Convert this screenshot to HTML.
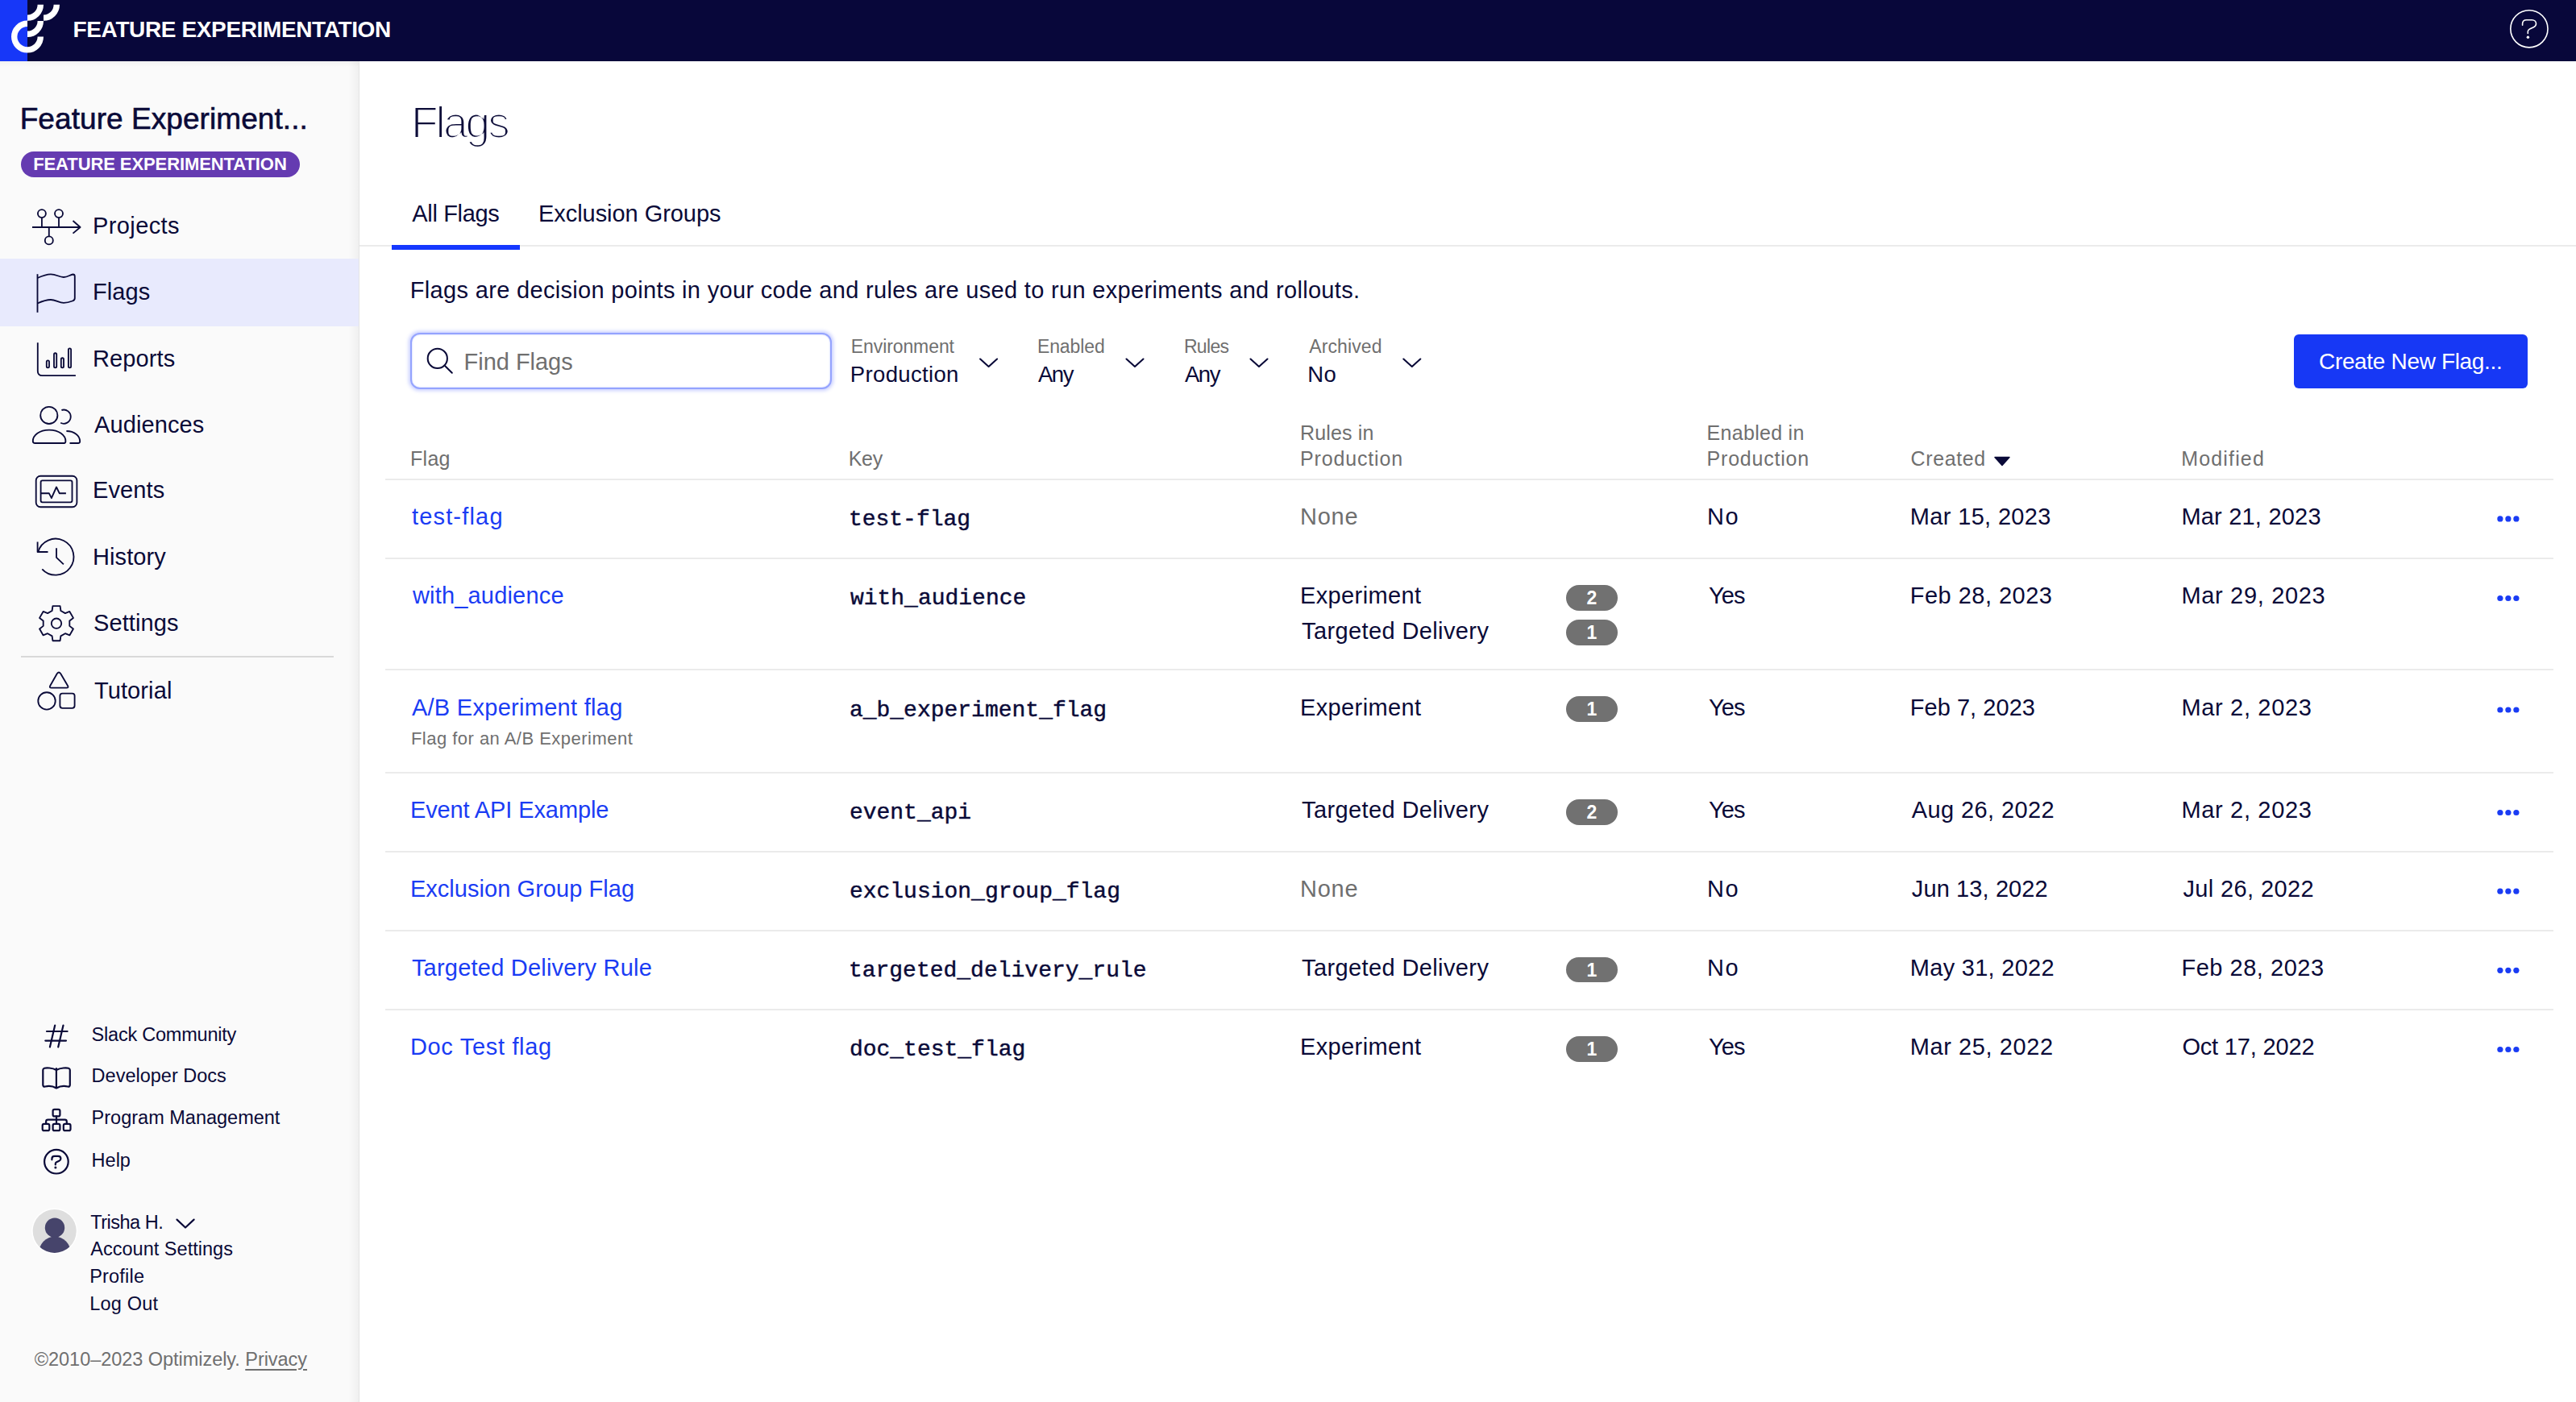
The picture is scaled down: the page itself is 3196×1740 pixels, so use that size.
<!DOCTYPE html>
<html><head><meta charset="utf-8"><title>Flags</title>
<style>
html,body{margin:0;padding:0;}
body{width:3196px;height:1740px;position:relative;overflow:hidden;background:#fff;font-family:"Liberation Sans",sans-serif;}
.t{position:absolute;white-space:nowrap;}
</style></head><body>
<svg width="0" height="0" style="position:absolute;left:0;top:0"><defs><filter id="erode1" x="-10%" y="-10%" width="120%" height="120%"><feMorphology operator="erode" radius="1"/></filter></defs></svg>
<div style="position:absolute;left:0.0px;top:76.0px;width:446.0px;height:1664.0px;background:#fafafa;"></div><div style="position:absolute;left:432.0px;top:76.0px;width:14.0px;height:1664.0px;background:linear-gradient(to right, rgba(0,0,0,0), rgba(0,0,0,0.045));"></div><div style="position:absolute;left:445.0px;top:76.0px;width:1.0px;height:1664.0px;background:#e4e4e4;"></div><div style="position:absolute;left:0.0px;top:76.0px;width:445.0px;height:7.0px;background:linear-gradient(to bottom, rgba(0,0,0,0.035), rgba(0,0,0,0));"></div><div style="position:absolute;left:0.0px;top:0.0px;width:3196.0px;height:76.0px;background:#08073a;"></div><div style="position:absolute;left:0.0px;top:0.0px;width:34.0px;height:76.0px;background:#1737f8;"></div><svg style="position:absolute;left:0px;top:0px;" width="100" height="76" viewBox="0 0 100 76" fill="none"><g stroke="#fff" stroke-width="7.4" fill="none"><path d="M34,29.3 A16.3,16.3 0 0 0 17.7,45.6 A16.3,16.3 0 0 0 34,61.9 A16.3,16.3 0 0 0 50.3,45.6"/><path d="M34,42.3 A16.3,16.3 0 0 0 50.3,26"/><path d="M34,22.1 A16.3,16.3 0 0 0 50.3,5.8"/><path d="M54,22.1 A16.3,16.3 0 0 0 70.3,5.8"/></g></svg><div class="t" style="left:90.6px;top:22.5px;font-size:28px;line-height:28px;color:#fff;font-weight:700;letter-spacing:-0.376px;font-family:'Liberation Sans',sans-serif;">FEATURE EXPERIMENTATION</div><svg style="position:absolute;left:3090px;top:0px;" width="100" height="76" viewBox="3090 0 100 76" fill="none"><g stroke="#fff" stroke-width="1.6" fill="none" stroke-linecap="round" stroke-linejoin="round"><circle cx="3137.9" cy="35.8" r="23.1"/><path d="M3129.6,31.2 V29.6 C3129.6,26.6 3131.6,24.8 3134.6,24.8 H3141.4 C3144.4,24.8 3146.5,26.8 3146.5,29.6 C3146.5,31.6 3145.3,32.9 3143.5,33.7 L3138.6,35.9 C3137.1,36.6 3136.3,37.6 3136.3,39.1 V41.5"/></g><circle cx="3136.4" cy="46.3" r="1.7" fill="#fff"/></svg><div class="t" style="left:24.7px;top:129.2px;font-size:37px;line-height:37px;color:#0a0a38;font-weight:400;letter-spacing:0.066px;font-family:'Liberation Sans',sans-serif;-webkit-text-stroke:0.6px #0a0a38;">Feature Experiment...</div><div style="position:absolute;left:26.0px;top:188.0px;width:346.0px;height:32.0px;background:#653bb1;border-radius:16px;"></div><div class="t" style="left:41.2px;top:193.2px;font-size:22px;line-height:22px;color:#fff;font-weight:700;letter-spacing:-0.09px;font-family:'Liberation Sans',sans-serif;">FEATURE EXPERIMENTATION</div><div style="position:absolute;left:0.0px;top:321.4px;width:445.0px;height:83.2px;background:#e8eafd;"></div><div class="t" style="left:115.0px;top:265.9px;font-size:29px;line-height:29px;color:#0a0a38;font-weight:400;letter-spacing:0.392px;font-family:'Liberation Sans',sans-serif;">Projects</div><div class="t" style="left:115.0px;top:348.1px;font-size:29px;line-height:29px;color:#0a0a38;font-weight:400;letter-spacing:0.1px;font-family:'Liberation Sans',sans-serif;">Flags</div><div class="t" style="left:115.0px;top:430.7px;font-size:29px;line-height:29px;color:#0a0a38;font-weight:400;letter-spacing:0.1px;font-family:'Liberation Sans',sans-serif;">Reports</div><div class="t" style="left:117.0px;top:512.7px;font-size:29px;line-height:29px;color:#0a0a38;font-weight:400;letter-spacing:0.1px;font-family:'Liberation Sans',sans-serif;">Audiences</div><div class="t" style="left:115.0px;top:594.2px;font-size:29px;line-height:29px;color:#0a0a38;font-weight:400;letter-spacing:0.1px;font-family:'Liberation Sans',sans-serif;">Events</div><div class="t" style="left:115.0px;top:676.8px;font-size:29px;line-height:29px;color:#0a0a38;font-weight:400;letter-spacing:0.1px;font-family:'Liberation Sans',sans-serif;">History</div><div class="t" style="left:116.0px;top:758.8px;font-size:29px;line-height:29px;color:#0a0a38;font-weight:400;letter-spacing:0.1px;font-family:'Liberation Sans',sans-serif;">Settings</div><div class="t" style="left:117.0px;top:842.6px;font-size:29px;line-height:29px;color:#0a0a38;font-weight:400;letter-spacing:0.1px;font-family:'Liberation Sans',sans-serif;">Tutorial</div><div style="position:absolute;left:26.0px;top:813.8px;width:388.0px;height:2.0px;background:#d9d9d9;"></div><svg style="position:absolute;left:0px;top:76px;" width="446" height="1664" viewBox="0 76 446 1664" fill="none"><g stroke="#0a0a38" stroke-width="1.85" fill="none" stroke-linecap="butt" stroke-linejoin="round"><path d="M40,282 H99.6 M90.5,274 L99.6,282 L90.5,289.6"/><circle cx="51.9" cy="265.1" r="5"/><path d="M51.9,270.1 V282"/><circle cx="73" cy="265.1" r="5"/><path d="M73,270.1 V282"/><circle cx="60.8" cy="298.4" r="5"/><path d="M60.8,282 V293.4"/><path d="M46.5,340.2 V387.8"/><path d="M46.5,345 C53,342 58,340.3 63,340.3 C70,340.3 73,344 79,344 C84,344 87,341 90.5,340.5 Q92.8,340.5 92.8,343 V370 Q92.8,372.5 90,373.5 C86,375 82,375.8 79,375.8 C73,375.8 69,372 63,372 C57,372 52,374 46.5,376.5"/><path d="M46.8,425.3 V460.4 Q46.8,466.1 52.5,466.1 H93.9"/><rect x="57.8" y="447.3" width="3.2" height="9" rx="1.6"/><rect x="67" y="438.2" width="3.2" height="18.1" rx="1.6"/><rect x="75.8" y="444.2" width="3.2" height="12.1" rx="1.6"/><rect x="84.9" y="432.4" width="3.2" height="23.9" rx="1.6"/><circle cx="60.8" cy="515.4" r="10.6"/><path d="M76.4,509 A8.6,8.6 0 1 1 75.2,524.8"/><path d="M43.5,550 H79.5 Q81.4,550 81.4,547.5 C81.4,540 73,533.6 61,533.6 C49,533.6 40.8,540 40.8,547.5 Q40.8,550 43.5,550 Z"/><path d="M82.4,535 C92,535 99.2,540.5 99.2,547.8 Q99.2,550 97,550 H86.5"/><rect x="44.7" y="590.7" width="50.7" height="38.5" rx="5.5"/><rect x="50.6" y="596.4" width="38.9" height="26.9" rx="2"/><path d="M50.6,612.2 H60.8 L63.9,618.2 L70,604.5 L73.7,612.2 H81.9"/><path d="M47.3,685 A22.5,22.5 0 1 1 52.3,706.3"/><path d="M46.6,672.5 V685 H59.5"/><path d="M70,680.2 V691.9 L78.9,700.4"/><path d="M64.60,758.00 L65.43,752.18 L74.57,752.18 L75.40,758.00 L80.89,761.17 L86.35,758.98 L90.92,766.90 L86.30,770.53 L86.30,776.87 L90.92,780.50 L86.35,788.42 L80.89,786.23 L75.40,789.40 L74.57,795.22 L65.43,795.22 L64.60,789.40 L59.11,786.23 L53.65,788.42 L49.08,780.50 L53.70,776.87 L53.70,770.53 L49.08,766.90 L53.65,758.98 L59.11,761.17 Z"/><circle cx="70" cy="773.7" r="6.2"/><path d="M70.8,836 Q73,833 75.2,836 L84,851 Q85.5,853.6 82.5,853.6 H63.8 Q60.8,853.6 62.3,851 Z"/><circle cx="58" cy="869.9" r="10.7"/><rect x="74.4" y="860.6" width="18.2" height="18.2" rx="3"/></g></svg><div class="t" style="left:113.6px;top:1272.7px;font-size:23.5px;line-height:23.5px;color:#0a0a38;font-weight:400;letter-spacing:-0.22px;font-family:'Liberation Sans',sans-serif;">Slack Community</div><div class="t" style="left:113.6px;top:1324.4px;font-size:23.5px;line-height:23.5px;color:#0a0a38;font-weight:400;letter-spacing:0.0px;font-family:'Liberation Sans',sans-serif;">Developer Docs</div><div class="t" style="left:113.6px;top:1376.1px;font-size:23.5px;line-height:23.5px;color:#0a0a38;font-weight:400;letter-spacing:0.0px;font-family:'Liberation Sans',sans-serif;">Program Management</div><div class="t" style="left:113.6px;top:1428.6px;font-size:23.5px;line-height:23.5px;color:#0a0a38;font-weight:400;letter-spacing:0.0px;font-family:'Liberation Sans',sans-serif;">Help</div><svg style="position:absolute;left:0px;top:1250px;" width="446" height="220" viewBox="0 1250 446 220" fill="none"><g stroke="#0a0a38" stroke-width="2.2" fill="none" stroke-linecap="round" stroke-linejoin="round"><path d="M68.2,1272.5 L61.9,1299.5 M78.5,1272.5 L72.2,1299.5 M58,1280 H83.6 M56.3,1291.6 H82"/><path d="M69.9,1326 V1350.5 M69.9,1328 C65,1325 57,1325 55,1325.8 Q53.3,1326.3 53.3,1328 V1346.5 Q53.3,1349 56,1348.5 C60,1347.5 65,1347.5 69.9,1350.5 C75,1347.5 80,1347.5 84,1348.5 Q86.8,1349 86.8,1346.5 V1328 Q86.8,1326.3 85,1325.8 C83,1325 75,1325 69.9,1328"/><rect x="65.6" y="1376.8" width="8.8" height="8.6" rx="2"/><path d="M70,1385.4 V1394.7 M57.1,1394.7 V1392 Q57.1,1389.7 59.5,1389.7 H80.5 Q82.8,1389.7 82.8,1392 V1394.7"/><rect x="52.7" y="1394.9" width="8.6" height="8.3" rx="2"/><rect x="65.6" y="1394.9" width="8.8" height="8.3" rx="2"/><rect x="78.8" y="1394.9" width="8.7" height="8.3" rx="2"/><circle cx="69.9" cy="1441.7" r="14.8"/><path d="M64.4,1439.3 V1438.2 C64.4,1436.2 65.7,1434.9 67.7,1434.9 H72.1 C74.1,1434.9 75.4,1436.2 75.4,1438.1 C75.4,1439.4 74.6,1440.3 73.4,1440.8 L70.2,1442.2 C69.2,1442.7 68.8,1443.3 68.8,1444.3 V1445.4"/></g><circle cx="68.9" cy="1448.9" r="1.5" fill="#0a0a38"/></svg><svg style="position:absolute;left:0px;top:1490px;" width="446" height="80" viewBox="0 1490 446 80" fill="none"><defs><clipPath id="av"><circle cx="67.7" cy="1527.9" r="27"/></clipPath></defs><circle cx="67.7" cy="1527.9" r="28.5" fill="#ffffff"/><circle cx="67.7" cy="1527.9" r="27" fill="#dedede"/><g clip-path="url(#av)" fill="#46446b"><circle cx="68" cy="1523.7" r="12.2"/><ellipse cx="68" cy="1556" rx="20" ry="21.5"/></g><path d="M219.5,1513.6 L230,1523.5 L240.6,1513.6" stroke="#0a0a38" stroke-width="2.2" fill="none" stroke-linecap="round" stroke-linejoin="round"/></svg><div class="t" style="left:112.2px;top:1505.5px;font-size:23.5px;line-height:23.5px;color:#0a0a38;font-weight:400;letter-spacing:-0.49px;font-family:'Liberation Sans',sans-serif;">Trisha H.</div><div class="t" style="left:112.2px;top:1539.2px;font-size:23.5px;line-height:23.5px;color:#0a0a38;font-weight:400;letter-spacing:0.026px;font-family:'Liberation Sans',sans-serif;">Account Settings</div><div class="t" style="left:111.2px;top:1572.8px;font-size:23.5px;line-height:23.5px;color:#0a0a38;font-weight:400;letter-spacing:0.2px;font-family:'Liberation Sans',sans-serif;">Profile</div><div class="t" style="left:111.2px;top:1607.0px;font-size:23.5px;line-height:23.5px;color:#0a0a38;font-weight:400;letter-spacing:0.2px;font-family:'Liberation Sans',sans-serif;">Log Out</div><div class="t" style="left:42.8px;top:1675.8px;font-size:23.5px;line-height:23.5px;color:#6f6f6f;font-weight:400;letter-spacing:-0.043px;font-family:'Liberation Sans',sans-serif;">©2010–2023 Optimizely. <span style="text-decoration:underline;text-underline-offset:4px;text-decoration-thickness:1.5px">Privacy</span></div><div class="t" style="left:509.9px;top:124.9px;font-size:55px;line-height:55px;color:#0a0a38;font-weight:400;letter-spacing:-2.898px;font-family:'Liberation Sans',sans-serif;filter:url(#erode1);">Flags</div><div class="t" style="left:511.3px;top:251.0px;font-size:29px;line-height:29px;color:#0a0a38;font-weight:400;letter-spacing:-0.337px;font-family:'Liberation Sans',sans-serif;">All Flags</div><div class="t" style="left:668.0px;top:251.0px;font-size:29px;line-height:29px;color:#0a0a38;font-weight:400;letter-spacing:-0.051px;font-family:'Liberation Sans',sans-serif;">Exclusion Groups</div><div style="position:absolute;left:446.0px;top:304.0px;width:2750.0px;height:2.0px;background:#ebebeb;"></div><div style="position:absolute;left:486.0px;top:303.6px;width:159.0px;height:6.1px;background:#1538ff;"></div><div class="t" style="left:508.8px;top:345.6px;font-size:29px;line-height:29px;color:#0a0a38;font-weight:400;letter-spacing:0.325px;font-family:'Liberation Sans',sans-serif;">Flags are decision points in your code and rules are used to run experiments and rollouts.</div><div style="position:absolute;left:508.8px;top:412.8px;width:522.8px;height:69.9px;box-sizing:border-box;border:2px solid #94a3fe;border-radius:12px;background:#fff;box-shadow:0 0 4px 1.5px rgba(90,110,255,0.33), inset 0 0 1.5px 0.5px rgba(120,140,255,0.35);"></div><svg style="position:absolute;left:510px;top:413px;" width="80" height="70" viewBox="510 413 80 70" fill="none"><g stroke="#0a0a38" stroke-width="2.05" fill="none" stroke-linecap="round"><circle cx="542.8" cy="444.9" r="12.1"/><path d="M551.5,453.6 L560.8,462.7"/></g></svg><div class="t" style="left:575.6px;top:435.1px;font-size:29px;line-height:29px;color:#6f6f6f;font-weight:400;letter-spacing:-0.032px;font-family:'Liberation Sans',sans-serif;">Find Flags</div><div class="t" style="left:1055.8px;top:418.9px;font-size:23px;line-height:23px;color:#6f6f6f;font-weight:400;letter-spacing:-0.094px;font-family:'Liberation Sans',sans-serif;">Environment</div><div class="t" style="left:1054.8px;top:450.5px;font-size:27.5px;line-height:27.5px;color:#0a0a38;font-weight:400;letter-spacing:0.35px;font-family:'Liberation Sans',sans-serif;">Production</div><div class="t" style="left:1286.9px;top:418.9px;font-size:23px;line-height:23px;color:#6f6f6f;font-weight:400;letter-spacing:-0.104px;font-family:'Liberation Sans',sans-serif;">Enabled</div><div class="t" style="left:1287.9px;top:450.5px;font-size:27.5px;line-height:27.5px;color:#0a0a38;font-weight:400;letter-spacing:-1.412px;font-family:'Liberation Sans',sans-serif;">Any</div><div class="t" style="left:1468.9px;top:418.9px;font-size:23px;line-height:23px;color:#6f6f6f;font-weight:400;letter-spacing:-0.674px;font-family:'Liberation Sans',sans-serif;">Rules</div><div class="t" style="left:1469.9px;top:450.5px;font-size:27.5px;line-height:27.5px;color:#0a0a38;font-weight:400;letter-spacing:-1.412px;font-family:'Liberation Sans',sans-serif;">Any</div><div class="t" style="left:1624.2px;top:418.9px;font-size:23px;line-height:23px;color:#6f6f6f;font-weight:400;letter-spacing:0.108px;font-family:'Liberation Sans',sans-serif;">Archived</div><div class="t" style="left:1622.2px;top:450.5px;font-size:27.5px;line-height:27.5px;color:#0a0a38;font-weight:400;letter-spacing:0.527px;font-family:'Liberation Sans',sans-serif;">No</div><svg style="position:absolute;left:1040px;top:400px;" width="760" height="100" viewBox="1040 400 760 100" fill="none"><g stroke="#0a0a38" stroke-width="2.1" fill="none" stroke-linecap="round" stroke-linejoin="round"><path d="M1216.1,445.5 L1226.6,455 L1237.1,445.5"/><path d="M1397.5,445.5 L1408,455 L1418.5,445.5"/><path d="M1551.5,445.5 L1562,455 L1572.5,445.5"/><path d="M1741.3,445.5 L1751.8,455 L1762.3,445.5"/></g></svg><div style="position:absolute;left:2846.0px;top:414.5px;width:290.0px;height:67.0px;background:#1738f5;border-radius:6px;"></div><div class="t" style="left:2877.0px;top:434.7px;font-size:28px;line-height:28px;color:#fff;font-weight:400;letter-spacing:-0.332px;font-family:'Liberation Sans',sans-serif;">Create New Flag...</div><div class="t" style="left:508.9px;top:556.8px;font-size:25px;line-height:25px;color:#6f6f6f;font-weight:400;letter-spacing:0.333px;font-family:'Liberation Sans',sans-serif;">Flag</div><div class="t" style="left:1052.7px;top:556.8px;font-size:25px;line-height:25px;color:#6f6f6f;font-weight:400;letter-spacing:-0.317px;font-family:'Liberation Sans',sans-serif;">Key</div><div class="t" style="left:1613.0px;top:525.0px;font-size:25px;line-height:25px;color:#6f6f6f;font-weight:400;letter-spacing:0.159px;font-family:'Liberation Sans',sans-serif;">Rules in</div><div class="t" style="left:1613.0px;top:556.8px;font-size:25px;line-height:25px;color:#6f6f6f;font-weight:400;letter-spacing:0.841px;font-family:'Liberation Sans',sans-serif;">Production</div><div class="t" style="left:2117.6px;top:525.0px;font-size:25px;line-height:25px;color:#6f6f6f;font-weight:400;letter-spacing:0.287px;font-family:'Liberation Sans',sans-serif;">Enabled in</div><div class="t" style="left:2117.6px;top:556.8px;font-size:25px;line-height:25px;color:#6f6f6f;font-weight:400;letter-spacing:0.772px;font-family:'Liberation Sans',sans-serif;">Production</div><div class="t" style="left:2370.6px;top:556.8px;font-size:25px;line-height:25px;color:#6f6f6f;font-weight:400;letter-spacing:0.611px;font-family:'Liberation Sans',sans-serif;">Created</div><div class="t" style="left:2706.2px;top:556.8px;font-size:25px;line-height:25px;color:#6f6f6f;font-weight:400;letter-spacing:1.163px;font-family:'Liberation Sans',sans-serif;">Modified</div><svg style="position:absolute;left:2460px;top:550px;" width="50" height="40" viewBox="2460 550 50 40" fill="none"><path d="M2475,567.5 H2493 L2484,577.5 Z" fill="#0a0a38" stroke="#0a0a38" stroke-width="1.5" stroke-linejoin="round"/></svg><div style="position:absolute;left:478.0px;top:594.0px;width:2690.0px;height:2.0px;background:#ebebeb;"></div><div style="position:absolute;left:478.0px;top:691.6px;width:2690.0px;height:2.0px;background:#ebebeb;"></div><div style="position:absolute;left:478.0px;top:829.7px;width:2690.0px;height:2.0px;background:#ebebeb;"></div><div style="position:absolute;left:478.0px;top:958.2px;width:2690.0px;height:2.0px;background:#ebebeb;"></div><div style="position:absolute;left:478.0px;top:1056.0px;width:2690.0px;height:2.0px;background:#ebebeb;"></div><div style="position:absolute;left:478.0px;top:1153.8px;width:2690.0px;height:2.0px;background:#ebebeb;"></div><div style="position:absolute;left:478.0px;top:1252.0px;width:2690.0px;height:2.0px;background:#ebebeb;"></div><div class="t" style="left:510.9px;top:626.8px;font-size:29px;line-height:29px;color:#1a3cf4;font-weight:400;letter-spacing:1.184px;font-family:'Liberation Sans',sans-serif;">test-flag</div><div class="t" style="left:1052.9px;top:630.5px;font-size:28px;line-height:28px;color:#0a0a38;font-weight:400;letter-spacing:0px;font-family:'Liberation Mono',sans-serif;-webkit-text-stroke:0.45px #0a0a38;">test-flag</div><div class="t" style="left:1613.0px;top:626.8px;font-size:29px;line-height:29px;color:#6f6f6f;font-weight:400;letter-spacing:0.767px;font-family:'Liberation Sans',sans-serif;">None</div><div class="t" style="left:2118.0px;top:626.8px;font-size:29px;line-height:29px;color:#0a0a38;font-weight:400;letter-spacing:1.457px;font-family:'Liberation Sans',sans-serif;">No</div><div class="t" style="left:2369.8px;top:626.8px;font-size:29px;line-height:29px;color:#0a0a38;font-weight:400;letter-spacing:0.34px;font-family:'Liberation Sans',sans-serif;">Mar 15, 2023</div><div class="t" style="left:2706.4px;top:626.8px;font-size:29px;line-height:29px;color:#0a0a38;font-weight:400;letter-spacing:0.204px;font-family:'Liberation Sans',sans-serif;">Mar 21, 2023</div><div class="t" style="left:511.9px;top:725.4px;font-size:29px;line-height:29px;color:#1a3cf4;font-weight:400;letter-spacing:0.185px;font-family:'Liberation Sans',sans-serif;">with_audience</div><div class="t" style="left:1054.9px;top:729.1px;font-size:28px;line-height:28px;color:#0a0a38;font-weight:400;letter-spacing:0px;font-family:'Liberation Mono',sans-serif;-webkit-text-stroke:0.45px #0a0a38;">with_audience</div><div class="t" style="left:1613.0px;top:725.4px;font-size:29px;line-height:29px;color:#0a0a38;font-weight:400;letter-spacing:0.376px;font-family:'Liberation Sans',sans-serif;">Experiment</div><div style="position:absolute;left:1943px;top:725.8px;width:64px;height:31.8px;border-radius:16px;background:#717171;color:#fff;font-family:'Liberation Sans',sans-serif;font-weight:700;font-size:23px;line-height:33px;text-align:center;">2</div><div class="t" style="left:1615.0px;top:768.9px;font-size:29px;line-height:29px;color:#0a0a38;font-weight:400;letter-spacing:0.39px;font-family:'Liberation Sans',sans-serif;">Targeted Delivery</div><div style="position:absolute;left:1943px;top:769.3px;width:64px;height:31.8px;border-radius:16px;background:#717171;color:#fff;font-family:'Liberation Sans',sans-serif;font-weight:700;font-size:23px;line-height:33px;text-align:center;">1</div><div class="t" style="left:2120.0px;top:725.4px;font-size:29px;line-height:29px;color:#0a0a38;font-weight:400;letter-spacing:-0.955px;font-family:'Liberation Sans',sans-serif;">Yes</div><div class="t" style="left:2369.8px;top:725.4px;font-size:29px;line-height:29px;color:#0a0a38;font-weight:400;letter-spacing:0.474px;font-family:'Liberation Sans',sans-serif;">Feb 28, 2023</div><div class="t" style="left:2706.4px;top:725.4px;font-size:29px;line-height:29px;color:#0a0a38;font-weight:400;letter-spacing:0.677px;font-family:'Liberation Sans',sans-serif;">Mar 29, 2023</div><div class="t" style="left:510.9px;top:863.9px;font-size:29px;line-height:29px;color:#1a3cf4;font-weight:400;letter-spacing:0.286px;font-family:'Liberation Sans',sans-serif;">A/B Experiment flag</div><div class="t" style="left:1053.9px;top:867.6px;font-size:28px;line-height:28px;color:#0a0a38;font-weight:400;letter-spacing:0px;font-family:'Liberation Mono',sans-serif;-webkit-text-stroke:0.45px #0a0a38;">a_b_experiment_flag</div><div class="t" style="left:509.9px;top:905.7px;font-size:22px;line-height:22px;color:#6f6f6f;font-weight:400;letter-spacing:0.48px;font-family:'Liberation Sans',sans-serif;">Flag for an A/B Experiment</div><div class="t" style="left:1613.0px;top:863.9px;font-size:29px;line-height:29px;color:#0a0a38;font-weight:400;letter-spacing:0.376px;font-family:'Liberation Sans',sans-serif;">Experiment</div><div style="position:absolute;left:1943px;top:864.3px;width:64px;height:31.8px;border-radius:16px;background:#717171;color:#fff;font-family:'Liberation Sans',sans-serif;font-weight:700;font-size:23px;line-height:33px;text-align:center;">1</div><div class="t" style="left:2120.0px;top:863.9px;font-size:29px;line-height:29px;color:#0a0a38;font-weight:400;letter-spacing:-0.955px;font-family:'Liberation Sans',sans-serif;">Yes</div><div class="t" style="left:2369.8px;top:863.9px;font-size:29px;line-height:29px;color:#0a0a38;font-weight:400;letter-spacing:0.034px;font-family:'Liberation Sans',sans-serif;">Feb 7, 2023</div><div class="t" style="left:2706.4px;top:863.9px;font-size:29px;line-height:29px;color:#0a0a38;font-weight:400;letter-spacing:0.677px;font-family:'Liberation Sans',sans-serif;">Mar 2, 2023</div><div class="t" style="left:508.9px;top:991.4px;font-size:29px;line-height:29px;color:#1a3cf4;font-weight:400;letter-spacing:-0.107px;font-family:'Liberation Sans',sans-serif;">Event API Example</div><div class="t" style="left:1053.9px;top:995.1px;font-size:28px;line-height:28px;color:#0a0a38;font-weight:400;letter-spacing:0px;font-family:'Liberation Mono',sans-serif;-webkit-text-stroke:0.45px #0a0a38;">event_api</div><div class="t" style="left:1615.0px;top:991.4px;font-size:29px;line-height:29px;color:#0a0a38;font-weight:400;letter-spacing:0.39px;font-family:'Liberation Sans',sans-serif;">Targeted Delivery</div><div style="position:absolute;left:1943px;top:991.8px;width:64px;height:31.8px;border-radius:16px;background:#717171;color:#fff;font-family:'Liberation Sans',sans-serif;font-weight:700;font-size:23px;line-height:33px;text-align:center;">2</div><div class="t" style="left:2120.0px;top:991.4px;font-size:29px;line-height:29px;color:#0a0a38;font-weight:400;letter-spacing:-0.955px;font-family:'Liberation Sans',sans-serif;">Yes</div><div class="t" style="left:2371.8px;top:991.4px;font-size:29px;line-height:29px;color:#0a0a38;font-weight:400;letter-spacing:0.39px;font-family:'Liberation Sans',sans-serif;">Aug 26, 2022</div><div class="t" style="left:2706.4px;top:991.4px;font-size:29px;line-height:29px;color:#0a0a38;font-weight:400;letter-spacing:0.677px;font-family:'Liberation Sans',sans-serif;">Mar 2, 2023</div><div class="t" style="left:508.9px;top:1089.1px;font-size:29px;line-height:29px;color:#1a3cf4;font-weight:400;letter-spacing:0.047px;font-family:'Liberation Sans',sans-serif;">Exclusion Group Flag</div><div class="t" style="left:1053.9px;top:1092.8px;font-size:28px;line-height:28px;color:#0a0a38;font-weight:400;letter-spacing:0px;font-family:'Liberation Mono',sans-serif;-webkit-text-stroke:0.45px #0a0a38;">exclusion_group_flag</div><div class="t" style="left:1613.0px;top:1089.1px;font-size:29px;line-height:29px;color:#6f6f6f;font-weight:400;letter-spacing:0.767px;font-family:'Liberation Sans',sans-serif;">None</div><div class="t" style="left:2118.0px;top:1089.1px;font-size:29px;line-height:29px;color:#0a0a38;font-weight:400;letter-spacing:1.457px;font-family:'Liberation Sans',sans-serif;">No</div><div class="t" style="left:2371.8px;top:1089.1px;font-size:29px;line-height:29px;color:#0a0a38;font-weight:400;letter-spacing:0.112px;font-family:'Liberation Sans',sans-serif;">Jun 13, 2022</div><div class="t" style="left:2708.4px;top:1089.1px;font-size:29px;line-height:29px;color:#0a0a38;font-weight:400;letter-spacing:0.374px;font-family:'Liberation Sans',sans-serif;">Jul 26, 2022</div><div class="t" style="left:510.9px;top:1187.2px;font-size:29px;line-height:29px;color:#1a3cf4;font-weight:400;letter-spacing:0.218px;font-family:'Liberation Sans',sans-serif;">Targeted Delivery Rule</div><div class="t" style="left:1052.9px;top:1190.9px;font-size:28px;line-height:28px;color:#0a0a38;font-weight:400;letter-spacing:0px;font-family:'Liberation Mono',sans-serif;-webkit-text-stroke:0.45px #0a0a38;">targeted_delivery_rule</div><div class="t" style="left:1615.0px;top:1187.2px;font-size:29px;line-height:29px;color:#0a0a38;font-weight:400;letter-spacing:0.39px;font-family:'Liberation Sans',sans-serif;">Targeted Delivery</div><div style="position:absolute;left:1943px;top:1187.6px;width:64px;height:31.8px;border-radius:16px;background:#717171;color:#fff;font-family:'Liberation Sans',sans-serif;font-weight:700;font-size:23px;line-height:33px;text-align:center;">1</div><div class="t" style="left:2118.0px;top:1187.2px;font-size:29px;line-height:29px;color:#0a0a38;font-weight:400;letter-spacing:1.457px;font-family:'Liberation Sans',sans-serif;">No</div><div class="t" style="left:2369.8px;top:1187.2px;font-size:29px;line-height:29px;color:#0a0a38;font-weight:400;letter-spacing:0.282px;font-family:'Liberation Sans',sans-serif;">May 31, 2022</div><div class="t" style="left:2706.4px;top:1187.2px;font-size:29px;line-height:29px;color:#0a0a38;font-weight:400;letter-spacing:0.529px;font-family:'Liberation Sans',sans-serif;">Feb 28, 2023</div><div class="t" style="left:508.9px;top:1285.4px;font-size:29px;line-height:29px;color:#1a3cf4;font-weight:400;letter-spacing:0.683px;font-family:'Liberation Sans',sans-serif;">Doc Test flag</div><div class="t" style="left:1053.9px;top:1289.1px;font-size:28px;line-height:28px;color:#0a0a38;font-weight:400;letter-spacing:0px;font-family:'Liberation Mono',sans-serif;-webkit-text-stroke:0.45px #0a0a38;">doc_test_flag</div><div class="t" style="left:1613.0px;top:1285.4px;font-size:29px;line-height:29px;color:#0a0a38;font-weight:400;letter-spacing:0.376px;font-family:'Liberation Sans',sans-serif;">Experiment</div><div style="position:absolute;left:1943px;top:1285.8px;width:64px;height:31.8px;border-radius:16px;background:#717171;color:#fff;font-family:'Liberation Sans',sans-serif;font-weight:700;font-size:23px;line-height:33px;text-align:center;">1</div><div class="t" style="left:2120.0px;top:1285.4px;font-size:29px;line-height:29px;color:#0a0a38;font-weight:400;letter-spacing:-0.955px;font-family:'Liberation Sans',sans-serif;">Yes</div><div class="t" style="left:2369.8px;top:1285.4px;font-size:29px;line-height:29px;color:#0a0a38;font-weight:400;letter-spacing:0.577px;font-family:'Liberation Sans',sans-serif;">Mar 25, 2022</div><div class="t" style="left:2707.4px;top:1285.4px;font-size:29px;line-height:29px;color:#0a0a38;font-weight:400;letter-spacing:-0.175px;font-family:'Liberation Sans',sans-serif;">Oct 17, 2022</div><svg style="position:absolute;left:3080px;top:600px;" width="80" height="760" viewBox="3080 600 80 760" fill="none"><g fill="#1a3cf4"><circle cx="3101.9" cy="643.9" r="3.6"/><circle cx="3111.9" cy="643.9" r="3.6"/><circle cx="3121.9" cy="643.9" r="3.6"/><circle cx="3101.9" cy="742.5" r="3.6"/><circle cx="3111.9" cy="742.5" r="3.6"/><circle cx="3121.9" cy="742.5" r="3.6"/><circle cx="3101.9" cy="881.0" r="3.6"/><circle cx="3111.9" cy="881.0" r="3.6"/><circle cx="3121.9" cy="881.0" r="3.6"/><circle cx="3101.9" cy="1008.5" r="3.6"/><circle cx="3111.9" cy="1008.5" r="3.6"/><circle cx="3121.9" cy="1008.5" r="3.6"/><circle cx="3101.9" cy="1106.2" r="3.6"/><circle cx="3111.9" cy="1106.2" r="3.6"/><circle cx="3121.9" cy="1106.2" r="3.6"/><circle cx="3101.9" cy="1204.3" r="3.6"/><circle cx="3111.9" cy="1204.3" r="3.6"/><circle cx="3121.9" cy="1204.3" r="3.6"/><circle cx="3101.9" cy="1302.5" r="3.6"/><circle cx="3111.9" cy="1302.5" r="3.6"/><circle cx="3121.9" cy="1302.5" r="3.6"/></g></svg>
</body></html>
